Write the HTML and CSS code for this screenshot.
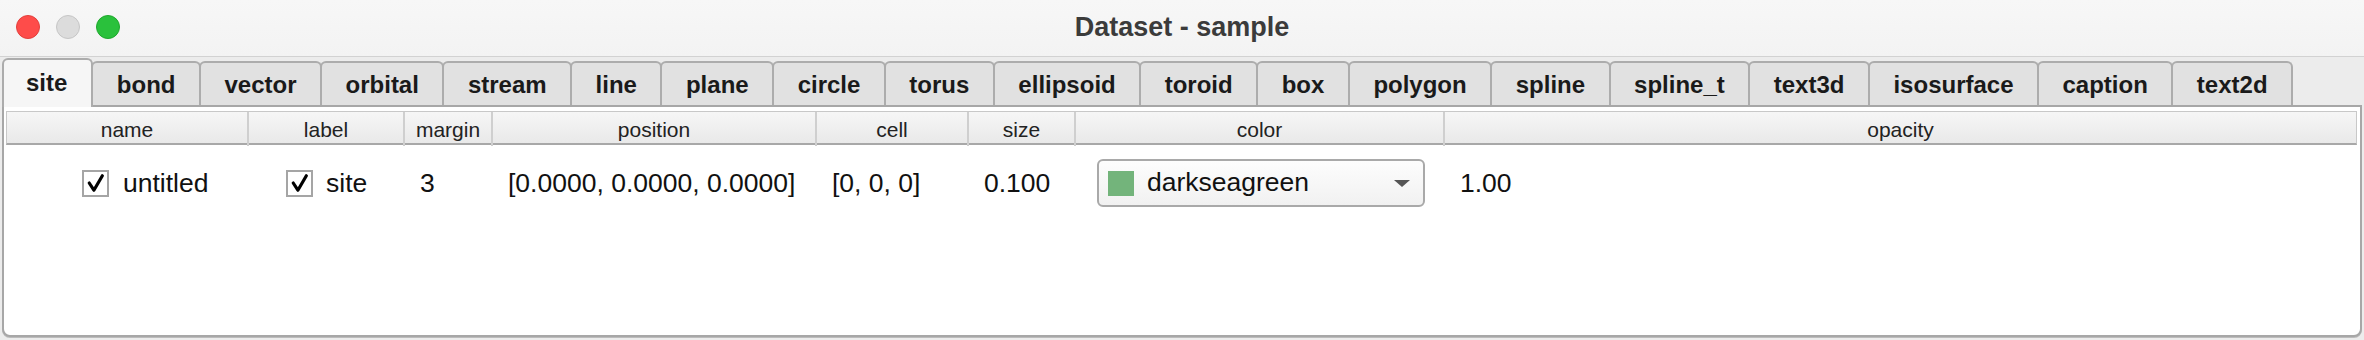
FILE: index.html
```html
<!DOCTYPE html>
<html>
<head>
<meta charset="utf-8">
<link rel="stylesheet" href="styles.css">
</head>
<body>
<div class="window">
  <div class="titlebar">
    <div class="lights">
      <span class="light red"></span>
      <span class="light gray"></span>
      <span class="light green"></span>
    </div>
    <div class="title">Dataset - sample</div>
    <div></div>
  </div>
  <div class="tabs">
    <div class="tab active">site</div>
    <div class="tab">bond</div>
    <div class="tab">vector</div>
    <div class="tab">orbital</div>
    <div class="tab">stream</div>
    <div class="tab">line</div>
    <div class="tab">plane</div>
    <div class="tab">circle</div>
    <div class="tab">torus</div>
    <div class="tab">ellipsoid</div>
    <div class="tab">toroid</div>
    <div class="tab">box</div>
    <div class="tab">polygon</div>
    <div class="tab">spline</div>
    <div class="tab">spline_t</div>
    <div class="tab">text3d</div>
    <div class="tab">isosurface</div>
    <div class="tab">caption</div>
    <div class="tab">text2d</div>
  </div>
  <div class="pane">
    <div class="thead cols">
      <div class="th">name</div>
      <div class="th">label</div>
      <div class="th">margin</div>
      <div class="th">position</div>
      <div class="th">cell</div>
      <div class="th">size</div>
      <div class="th">color</div>
      <div class="th last">opacity</div>
    </div>
    <div class="row cols">
      <div class="td td-name">
        <span class="check"><svg viewBox="0 0 26 26" width="22" height="22"><path d="M5 13 L10.5 21.5 L20.5 4.5" fill="none" stroke="#000" stroke-width="3.8" stroke-linecap="round" stroke-linejoin="round"/></svg></span>
        <span>untitled</span>
      </div>
      <div class="td td-label">
        <span class="check"><svg viewBox="0 0 26 26" width="22" height="22"><path d="M5 13 L10.5 21.5 L20.5 4.5" fill="none" stroke="#000" stroke-width="3.8" stroke-linecap="round" stroke-linejoin="round"/></svg></span>
        <span>site</span>
      </div>
      <div class="td">3</div>
      <div class="td">[0.0000, 0.0000, 0.0000]</div>
      <div class="td">[0, 0, 0]</div>
      <div class="td">0.100</div>
      <div class="td td-color">
        <div class="combo">
          <span class="swatch"></span>
          <span class="combo-text">darkseagreen</span>
          <span class="arrow"></span>
        </div>
      </div>
      <div class="td">1.00</div>
    </div>
  </div>
</div>
</body>
</html>
```

FILE: styles.css
```css
* { box-sizing: border-box; }
html, body { margin: 0; padding: 0; }
body {
  background: #ececec;
  font-family: "Liberation Sans", Arial, sans-serif;
  color: #111;
}
.window {
  width: 2364px;
  height: 340px;
  overflow: hidden;
  background: #ececec;
}
.titlebar {
  height: 57px;
  background: linear-gradient(#f7f7f7, #f3f3f3);
  border-bottom: 1px solid #d2d2d2;
  display: grid;
  grid-template-columns: 1fr auto 1fr;
  align-items: center;
}
.lights {
  display: flex;
  gap: 16px;
  padding-left: 16px;
  padding-bottom: 2px;
}
.light {
  width: 24px;
  height: 24px;
  border-radius: 50%;
  display: block;
}
.light.red { background: #fe4c4a; border: 1px solid #e2403c; }
.light.gray { background: #dcdcdc; border: 1px solid #c6c6c6; }
.light.green { background: #2ac13c; border: 1px solid #1fa82d; }
.title {
  font-weight: bold;
  font-size: 27px;
  color: #3b3b3b;
  padding-bottom: 2px;
}
.tabs {
  display: flex;
  align-items: flex-end;
  height: 48px;
  padding-left: 2px;
}
.tab {
  height: 44px;
  padding: 0 23.5px;
  background: #e1e1e1;
  border: 2px solid #acacac;
  border-bottom: none;
  border-radius: 6px 6px 0 0;
  margin-right: -2px;
  font-weight: bold;
  font-size: 24px;
  color: #1a1a1a;
  display: flex;
  align-items: center;
  padding-top: 2px;
}
.tab.active {
  height: 49px;
  margin-bottom: -2px;
  background: #f6f6f6;
  position: relative;
  z-index: 2;
  padding-bottom: 4px;
  padding-left: 22px;
  padding-right: 24px;
}
.pane {
  margin: 0 2px;
  height: 232px;
  background: #fff;
  border: 2px solid #a7a7a7;
  border-radius: 0 0 8px 8px;
  padding: 4px 3px 0 2px;
  box-shadow: 0 1px 0 #bcbcbc;
  position: relative;
  z-index: 1;
}
.cols {
  display: grid;
  grid-template-columns: 242px 156px 88px 324px 152px 107px 369px 1fr;
}
.thead {
  height: 34px;
  border-top: 1px solid #c8c8c8;
  border-left: 1px solid #c8c8c8;
  border-right: 1px solid #c8c8c8;
  border-bottom: 2px solid #a8a8a8;
  background: linear-gradient(#f6f6f6, #e9e9e9);
}
.th {
  font-size: 21px;
  color: #222;
  text-align: center;
  line-height: 32px;
  padding-top: 2px;
  border-right: 2px solid #cfcfcf;
}
.th.last { border-right: none; }
.row {
  height: 76px;
  align-items: center;
}
.td {
  font-size: 26.5px;
  color: #111;
  padding-left: 16px;
  display: flex;
  align-items: center;
  white-space: nowrap;
}
.td-name { padding-left: 76px; gap: 14px; }
.td-label { padding-left: 38px; gap: 13px; }
.check {
  width: 27px;
  height: 27px;
  border: 2px solid #a5a5a5;
  background: #fff;
  display: flex;
  align-items: center;
  justify-content: center;
}
.td-color { padding-left: 22px; }
.combo {
  width: 328px;
  height: 48px;
  border: 2px solid #a9a9a9;
  border-radius: 6px;
  background: linear-gradient(#fdfdfd, #f1f1f1);
  display: flex;
  align-items: center;
  padding-left: 9px;
  padding-right: 13px;
}
.swatch {
  width: 26px;
  height: 25px;
  background: #73b47b;
  margin-right: 13px;
}
.combo-text {
  flex: 1;
  font-size: 26.5px;
  color: #111;
  padding-bottom: 2px;
}
.arrow {
  width: 0;
  height: 0;
  border-left: 8px solid transparent;
  border-right: 8px solid transparent;
  border-top: 7px solid #555;
}
```
